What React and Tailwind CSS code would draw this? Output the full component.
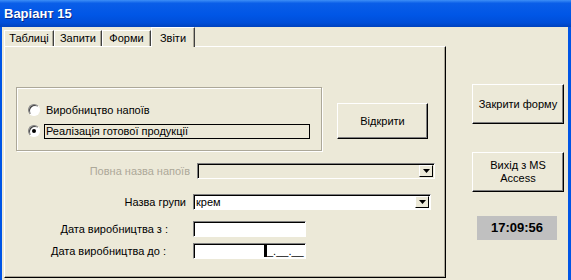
import React from "react";

const font = { fontFamily: '"Liberation Sans", Arial, sans-serif' };

function Radio({ checked }) {
  return (
    <div className="w-[12px] h-[12px] rounded-full bg-white border border-t-[#808080] border-l-[#808080] border-r-white border-b-white shadow-[inset_1px_1px_0_#404040] flex items-center justify-center">
      {checked && <div className="w-[4px] h-[4px] rounded-full bg-black" />}
    </div>
  );
}

function Combo({ width, value, disabled }) {
  return (
    <div
      className={`h-[16px] flex border border-t-[#808080] border-l-[#808080] border-r-white border-b-white shadow-[inset_1px_1px_0_#000] ${
        disabled ? "bg-[#ece9d8]" : "bg-white"
      }`}
      style={{ width }}
    >
      <div className="flex-1 pl-[2px] pt-[1px] text-[11px] leading-[13px] text-black">{value}</div>
      <div className="w-[14px] h-[12px] mt-[1px] mr-[1px] bg-[#ece9d8] border border-t-white border-l-white border-r-black border-b-black flex items-center justify-center">
        <svg width="7" height="4" viewBox="0 0 7 4">
          <path d="M0 0h7L3.5 4z" fill="#000" />
        </svg>
      </div>
    </div>
  );
}

function TextBox({ children }) {
  return (
    <div className="w-[113px] h-[16px] bg-white border border-t-[#808080] border-l-[#808080] border-r-white border-b-white shadow-[inset_1px_1px_0_#000] flex items-end">
      {children}
    </div>
  );
}

function Button({ className, children }) {
  return (
    <div
      className={`bg-[#ece9d8] border border-t-white border-l-white border-r-black border-b-black shadow-[inset_-1px_-1px_0_#808080] flex items-center justify-center text-center text-[11px] leading-[13px] text-black ${className}`}
    >
      {children}
    </div>
  );
}

function Tab({ label, width, active }) {
  if (active) {
    return (
      <div
        className="relative z-10 h-[20px] -mb-px bg-[#ece9d8] border-t border-l border-white border-r border-r-[#404040] shadow-[inset_-1px_0_0_#aca899] flex items-start justify-center pt-[2px] text-[11px] text-black"
        style={{ width }}
      >
        {label}
      </div>
    );
  }
  return (
    <div
      className="h-[16px] bg-[#ece9d8] border-t border-l border-white border-r border-r-[#404040] shadow-[inset_-1px_0_0_#aca899] flex items-center justify-center text-[11px] text-black"
      style={{ width }}
    >
      {label}
    </div>
  );
}

export default function App() {
  return (
    <div className="w-[571px] h-[280px] overflow-hidden bg-[#0055e5]" style={font}>
      <div className="h-[27px] bg-[linear-gradient(to_bottom,#3d8ff7_0%,#0a5ee8_12%,#0056e6_55%,#004ed8_85%,#0042bd_100%)] flex items-center pl-[4px] pt-[1px]">
        <span className="text-white font-bold text-[13px] [text-shadow:1px_1px_0_#0a2a8a]">Варіант 15</span>
      </div>
      <div className="h-[253px] ml-[2px] mr-[3px] bg-[#ece9d8] flex pl-[2px]">
        <div className="w-[442px] flex flex-col">
          <div className="h-[19px] flex items-end">
            <Tab label="Таблиці" width={50} />
            <Tab label="Запити" width={48} />
            <Tab label="Форми" width={49} />
            <Tab label="Звіти" width={44} active />
          </div>
          <div className="h-[232px] border-t border-l border-white border-r border-b border-r-black border-b-black shadow-[inset_-1px_-1px_0_#aca899] flex flex-col pt-[40px]">
            <div className="flex items-start pl-[11px]">
              <div className="w-[306px] h-[64px] border border-[#aca899] shadow-[1px_1px_0_white,inset_1px_1px_0_white] flex flex-col pt-[15px] pl-[11px]">
                <div className="flex items-center h-[14px]">
                  <Radio />
                  <span className="ml-[6px] text-[11px] text-black">Виробництво напоїв</span>
                </div>
                <div className="flex items-center h-[14px] mt-[7px]">
                  <Radio checked />
                  <span className="ml-[4px] w-[266px] h-[15px] border border-black pl-[1px] text-[11px] leading-[13px] text-black">
                    Реалізація готової продукції
                  </span>
                </div>
              </div>
              <Button className="w-[91px] h-[36px] ml-[15px] mt-[16px]">Відкрити</Button>
            </div>

            <div className="flex items-center mt-[12px]">
              <div className="w-[185px] text-right text-[11px] text-[#aca899]">Повна назва напоїв</div>
              <div className="ml-[7px]">
                <Combo width={238} value="" disabled />
              </div>
            </div>
            <div className="flex items-center mt-[14px]">
              <div className="w-[181px] text-right text-[11px] text-black">Назва групи</div>
              <div className="ml-[7px]">
                <Combo width={238} value="крем" />
              </div>
            </div>
            <div className="flex items-center mt-[11px]">
              <div className="w-[163px] text-right text-[11px] text-black">Дата виробництва з :</div>
              <div className="ml-[25px]">
                <TextBox />
              </div>
            </div>
            <div className="flex items-center mt-[5px]">
              <div className="w-[161px] text-right text-[11px] text-black">Дата виробництва до :</div>
              <div className="ml-[27px]">
                <TextBox>
                  <div className="ml-[70px] mb-[1px] flex items-end">
                    <div className="w-[3px] h-[13px] bg-black" />
                    <span className="text-[11px] leading-[12px] text-black">_.__.__</span>
                  </div>
                </TextBox>
              </div>
            </div>
          </div>
        </div>

        <div className="flex flex-col pt-[57px] pl-[26px]">
          <Button className="w-[92px] h-[40px]">Закрити форму</Button>
          <Button className="w-[92px] h-[40px] mt-[28px]">
            Вихід з MS
            <br />
            Access
          </Button>
          <div className="w-[80px] h-[24px] mt-[24px] ml-[5px] bg-[#c0c0c0] flex items-center justify-center text-[13px] font-bold text-black">
            17:09:56
          </div>
        </div>
      </div>
    </div>
  );
}
